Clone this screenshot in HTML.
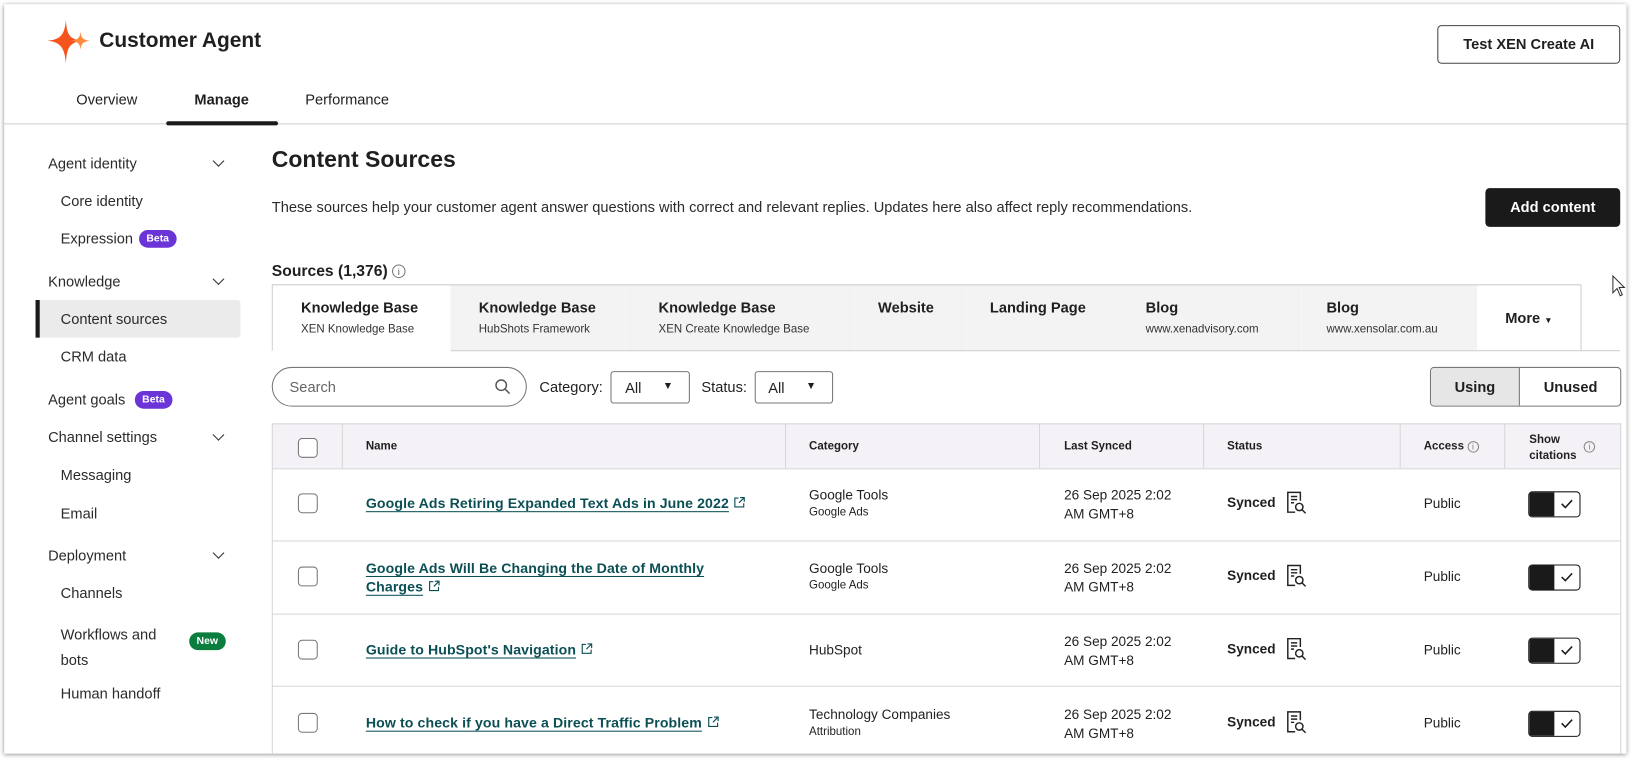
<!DOCTYPE html>
<html><head><meta charset="utf-8"><style>
*{box-sizing:border-box;margin:0;padding:0}
html,body{width:1639px;height:763px;overflow:hidden;background:#fff;font-family:"Liberation Sans",Arial,sans-serif;color:#1f1f1f}
#s{position:absolute;left:0;top:0;width:1568px;height:730px;transform:scale(1.0453);transform-origin:0 0}
.win{position:absolute;left:4px;top:4px;width:1552px;height:717px;background:#fff;box-shadow:0 1px 4px rgba(0,0,0,.45);overflow:hidden}
.a{position:absolute;white-space:nowrap}
.b{font-weight:bold}
.side{font-size:14px;color:#2b2b2b}
.pill{position:absolute;font-size:10px;font-weight:bold;color:#fff;border-radius:10px;padding:3px 7px}
.tab{position:absolute;top:272px;height:64px;border:1px solid #cfcfcf;border-left:none;background:#f3f3f3;padding:13px 0 0 27px}
.tab .t{font-size:14px;font-weight:bold}
.tab .u{font-size:11px;margin-top:7px;color:#333}
.cell{position:absolute;font-size:13px}
.hl{position:absolute;height:1px;background:#d6d6d6}
.vl{position:absolute;width:1px;background:#d6d6d6}
.cb{position:absolute;width:19px;height:19px;border:1.5px solid #777;border-radius:4px;background:#fff}
.lnk{position:absolute;font-size:13.5px;font-weight:bold;color:#0b4f55;line-height:18px;letter-spacing:.1px}
.lnk u{text-underline-offset:3px}
.ext{display:inline-block;width:11px;height:11px;margin-left:5px;vertical-align:0}
.tg{position:absolute;width:50px;height:25px;border:1.5px solid #1a1a1a;border-radius:4px;overflow:hidden;background:#fff}
.tg:before{content:"";position:absolute;left:0;top:0;width:24px;height:100%;background:#1a1a1a}
.tg svg{position:absolute;left:30px;top:6px}
.chev{position:absolute;width:8px;height:8px;border-right:1.5px solid #333;border-bottom:1.5px solid #333;transform:rotate(45deg)}
</style></head><body><div id="s"><div class="win">
<div style="position:absolute;left:-4px;top:-4px;width:1560px;height:730px">
<svg width="0" height="0" style="position:absolute"><defs>
<symbol id="ex" viewBox="0 0 11 11"><path d="M4.5 1.5 H1 V10 H9.5 V6.5 M6 1 H10 V5 M10 1 L5 6" fill="none" stroke="#0b4f55" stroke-width="1.1"/></symbol>
<symbol id="ck" viewBox="0 0 12 10"><path d="M1 5 L4.5 8.5 L11 1.5" fill="none" stroke="#1a1a1a" stroke-width="1.5"/></symbol>
</defs></svg>
<!-- header -->
<svg class="a" style="left:44px;top:18px" width="44" height="44" viewBox="0 0 44 44"><path d="M19 1 C20 15 22 20 36 21 C22 22 20 28 19 43 C18 28 14 22 1 21 C14 20 18 15 19 1Z" fill="#f5541d"/><path d="M33 12 C33.5 18 35 20 42 21 C35 22 33.5 24 33 30 C32.5 24 31 22 24 21 C31 20 32.5 18 33 12Z" fill="#ff8a3d"/></svg>
<div class="a b" style="left:95px;top:28px;font-size:20px">Customer Agent</div>
<div class="a b" style="left:1375px;top:24px;width:175px;height:37px;border:1px solid #444;border-radius:4px;font-size:14px;text-align:center;line-height:35px">Test XEN Create AI</div>
<div class="a" style="left:73px;top:87px;font-size:14px">Overview</div>
<div class="a b" style="left:186px;top:87px;font-size:14px">Manage</div>
<div class="a" style="left:292px;top:87px;font-size:14px">Performance</div>
<div class="hl" style="left:0;top:118px;width:1560px;background:#cfcfcf"></div>
<div class="a" style="left:159px;top:116px;width:107px;height:4px;border-radius:2px;background:#1a1a1a"></div>
<!-- sidebar -->
<div class="a" style="left:34px;top:287px;width:196px;height:36px;background:#ebebeb;border-radius:3px"></div>
<div class="a" style="left:34px;top:287px;width:4px;height:36px;background:#1a1a1a"></div>
<div class="a side" style="left:46px;top:148px">Agent identity</div><div class="chev" style="left:205px;top:150px"></div>
<div class="a side" style="left:58px;top:184px">Core identity</div>
<div class="a side" style="left:58px;top:220px">Expression</div><div class="pill" style="left:133px;top:220px;background:#6b34d6">Beta</div>
<div class="a side" style="left:46px;top:261px">Knowledge</div><div class="chev" style="left:205px;top:263px"></div>
<div class="a side" style="left:58px;top:297px">Content sources</div>
<div class="a side" style="left:58px;top:333px">CRM data</div>
<div class="a side" style="left:46px;top:374px">Agent goals</div><div class="pill" style="left:129px;top:374px;background:#6b34d6">Beta</div>
<div class="a side" style="left:46px;top:410px">Channel settings</div><div class="chev" style="left:205px;top:412px"></div>
<div class="a side" style="left:58px;top:446px">Messaging</div>
<div class="a side" style="left:58px;top:483px">Email</div>
<div class="a side" style="left:46px;top:523px">Deployment</div><div class="chev" style="left:205px;top:525px"></div>
<div class="a side" style="left:58px;top:559px">Channels</div>
<div class="a side" style="left:58px;top:595px;line-height:24px;white-space:normal;width:110px">Workflows and bots</div><div class="pill" style="left:181px;top:605px;background:#0b7d3e">New</div>
<div class="a side" style="left:58px;top:655px">Human handoff</div>
<!-- main -->
<div class="a b" style="left:260px;top:140px;font-size:22px">Content Sources</div>
<div class="a" style="left:260px;top:190px;font-size:14px;color:#2b2b2b">These sources help your customer agent answer questions with correct and relevant replies. Updates here also affect reply recommendations.</div>
<div class="a b" style="left:1421px;top:180px;width:129px;height:37px;background:#1a1a1a;color:#fff;border-radius:4px;font-size:14px;text-align:center;line-height:37px">Add content</div>
<div class="a b" style="left:260px;top:251px;font-size:15px">Sources (1,376) <span style="display:inline-block;width:13px;height:13px;border:1px solid #777;border-radius:50%;font-size:9px;font-weight:normal;text-align:center;line-height:12px;color:#555;vertical-align:1px">i</span></div>
<div class="a" style="left:260px;top:272px;width:1253px;height:1px;background:#cfcfcf"></div>
<div class="tab" style="left:260px;width:172px;background:#fff;border-left:1px solid #cfcfcf;border-bottom-color:#fff"><div class="t">Knowledge Base</div><div class="u">XEN Knowledge Base</div></div>
<div class="tab" style="left:431px;width:173px"><div class="t">Knowledge Base</div><div class="u">HubShots Framework</div></div>
<div class="tab" style="left:603px;width:211px"><div class="t">Knowledge Base</div><div class="u">XEN Create Knowledge Base</div></div>
<div class="tab" style="left:813px;width:108px"><div class="t">Website</div></div>
<div class="tab" style="left:920px;width:150px"><div class="t">Landing Page</div></div>
<div class="tab" style="left:1069px;width:174px"><div class="t">Blog</div><div class="u">www.xenadvisory.com</div></div>
<div class="tab" style="left:1242px;width:172px"><div class="t">Blog</div><div class="u">www.xensolar.com.au</div></div>
<div class="tab" style="left:1413px;width:100px;background:#fff;padding:23px 0 0 27px"><div class="t">More <span style="font-size:8px">▼</span></div></div>
<div class="hl" style="left:1513px;top:335px;width:37px;background:#cfcfcf"></div>
<!-- filters -->
<div class="a" style="left:260px;top:351px;width:244px;height:38px;border:1px solid #777;border-radius:19px"></div>
<div class="a" style="left:277px;top:362px;font-size:14px;color:#666">Search</div>
<svg class="a" style="left:473px;top:362px" width="16" height="16" viewBox="0 0 16 16" fill="none" stroke="#555" stroke-width="1.4"><circle cx="6.5" cy="6.5" r="5"/><path d="M10.2 10.2 L14.5 14.5"/></svg>
<div class="a" style="left:516px;top:362px;font-size:14px">Category:</div>
<div class="a" style="left:584px;top:355px;width:76px;height:31px;border:1px solid #777;border-radius:3px;font-size:14px;padding:7px 0 0 13px">All<span style="position:absolute;left:49px;top:8px;font-size:10px">▼</span></div>
<div class="a" style="left:671px;top:362px;font-size:14px">Status:</div>
<div class="a" style="left:722px;top:355px;width:75px;height:31px;border:1px solid #777;border-radius:3px;font-size:14px;padding:7px 0 0 12px">All<span style="position:absolute;left:48px;top:8px;font-size:10px">▼</span></div>
<div class="a" style="left:1368px;top:351px;width:183px;height:38px;border:1px solid #777;border-radius:4px;overflow:hidden">
<div class="a b" style="left:0;top:0;width:85px;height:36px;background:#e6e6e6;border-right:1px solid #777;text-align:center;line-height:36px;font-size:14px">Using</div>
<div class="a b" style="left:85px;top:0;width:97px;height:36px;text-align:center;line-height:36px;font-size:14px">Unused</div></div>
<!-- table -->
<div class="a" style="left:260px;top:405px;width:1291px;height:43px;background:#f5f2f7"></div>
<div class="a" style="left:260px;top:405px;width:1291px;height:330px;border:1px solid #d6d6d6"></div>
<div class="hl" style="left:260px;top:448px;width:1291px"></div>
<div class="hl" style="left:260px;top:517px;width:1291px"></div>
<div class="hl" style="left:260px;top:587px;width:1291px"></div>
<div class="hl" style="left:260px;top:656px;width:1291px"></div>
<div class="vl" style="left:327px;top:405px;height:43px"></div>
<div class="vl" style="left:751px;top:405px;height:43px"></div>
<div class="vl" style="left:994px;top:405px;height:43px"></div>
<div class="vl" style="left:1151px;top:405px;height:43px"></div>
<div class="vl" style="left:1339px;top:405px;height:43px"></div>
<div class="vl" style="left:1439px;top:405px;height:43px"></div>
<div class="cb" style="left:285px;top:419px"></div>
<div class="cell b" style="left:350px;top:421px;font-size:11px">Name</div>
<div class="cell b" style="left:774px;top:421px;font-size:11px">Category</div>
<div class="cell b" style="left:1018px;top:421px;font-size:11px">Last Synced</div>
<div class="cell b" style="left:1174px;top:421px;font-size:11px">Status</div>
<div class="cell b" style="left:1362px;top:421px;font-size:11px">Access <span style="display:inline-block;width:11px;height:11px;border:1px solid #888;border-radius:50%;font-size:8px;font-weight:normal;text-align:center;line-height:10px;color:#777">i</span></div>
<div class="cell b" style="left:1463px;top:414px;font-size:11px;line-height:15px">Show<br>citations</div>
<div class="a" style="left:1515px;top:422px;width:11px;height:11px;border:1px solid #888;border-radius:50%;font-size:8px;text-align:center;line-height:10px;color:#777">i</div>
<!-- rows -->
<div class="cb" style="left:285px;top:472px"></div>
<div class="lnk" style="left:350px;top:473px"><u>Google Ads Retiring Expanded Text Ads in June 2022</u><svg class="ext"><use href="#ex"/></svg></div>
<div class="cell" style="left:774px;top:466px;font-size:13px">Google Tools<div style="font-size:11px;margin-top:3px">Google Ads</div></div>
<div class="cell" style="left:1018px;top:465px;line-height:18px">26 Sep 2025 2:02<br>AM GMT+8</div>
<div class="cell b" style="left:1174px;top:473px">Synced</div>
<div class="cell" style="left:1362px;top:474px">Public</div>
<div class="tg" style="left:1462px;top:470px"><svg width="12" height="10"><use href="#ck"/></svg></div>

<div class="cb" style="left:285px;top:542px"></div>
<div class="lnk" style="left:350px;top:535px"><u>Google Ads Will Be Changing the Date of Monthly</u><br><u>Charges</u><svg class="ext"><use href="#ex"/></svg></div>
<div class="cell" style="left:774px;top:536px">Google Tools<div style="font-size:11px;margin-top:3px">Google Ads</div></div>
<div class="cell" style="left:1018px;top:535px;line-height:18px">26 Sep 2025 2:02<br>AM GMT+8</div>
<div class="cell b" style="left:1174px;top:543px">Synced</div>
<div class="cell" style="left:1362px;top:544px">Public</div>
<div class="tg" style="left:1462px;top:540px"><svg width="12" height="10"><use href="#ck"/></svg></div>

<div class="cb" style="left:285px;top:612px"></div>
<div class="lnk" style="left:350px;top:613px"><u>Guide to HubSpot's Navigation</u><svg class="ext"><use href="#ex"/></svg></div>
<div class="cell" style="left:774px;top:614px">HubSpot</div>
<div class="cell" style="left:1018px;top:605px;line-height:18px">26 Sep 2025 2:02<br>AM GMT+8</div>
<div class="cell b" style="left:1174px;top:613px">Synced</div>
<div class="cell" style="left:1362px;top:614px">Public</div>
<div class="tg" style="left:1462px;top:610px"><svg width="12" height="10"><use href="#ck"/></svg></div>

<div class="cb" style="left:285px;top:682px"></div>
<div class="lnk" style="left:350px;top:683px"><u>How to check if you have a Direct Traffic Problem</u><svg class="ext"><use href="#ex"/></svg></div>
<div class="cell" style="left:774px;top:676px">Technology Companies<div style="font-size:11px;margin-top:3px">Attribution</div></div>
<div class="cell" style="left:1018px;top:675px;line-height:18px">26 Sep 2025 2:02<br>AM GMT+8</div>
<div class="cell b" style="left:1174px;top:683px">Synced</div>
<div class="cell" style="left:1362px;top:684px">Public</div>
<div class="tg" style="left:1462px;top:680px"><svg width="12" height="10"><use href="#ck"/></svg></div>

<svg class="a" style="left:1229px;top:470px" width="24" height="240" viewBox="0 0 24 240" fill="none" stroke="#222" stroke-width="1.4">
<g id="ic"><path d="M10 20 H3 V1 H15 V9 M6 5 H12 M6 8 H12 M6 11 H9"/><circle cx="14" cy="15" r="3.5"/><path d="M16.5 17.5 L20 21"/></g>
<use href="#ic" y="70"/><use href="#ic" y="140"/><use href="#ic" y="210"/></svg>
</div></div>
<svg class="a" style="left:1542px;top:263px" width="14" height="22" viewBox="0 0 14 22"><path d="M1 1 V17 L5 13 L8 20 L10 19 L7 12 H12 Z" fill="#fff" stroke="#333" stroke-width="1"/></svg>
</div></body></html>
